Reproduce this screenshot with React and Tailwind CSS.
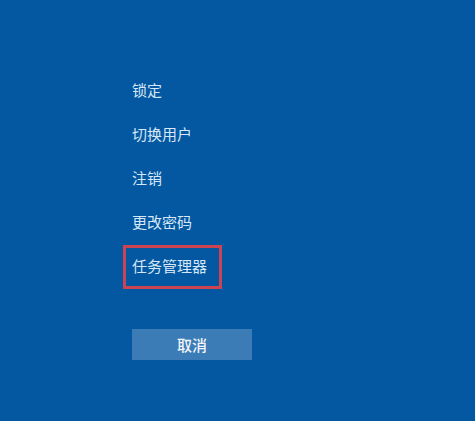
import React from "react";

const font = { fontFamily: '"Noto Sans CJK SC", "Microsoft YaHei", sans-serif' };

export default function App() {
  const items = ["锁定", "切换用户", "注销", "更改密码"];
  return (
    <div className="w-[475px] h-[421px] bg-[#0458a2] overflow-hidden" style={font}>
      <div className="pl-[132px] pt-[69px] flex flex-col">
        {items.map((t) => (
          <div key={t} className="h-[44px] flex items-center pb-[3px] text-[15px] leading-none text-[#d6e7f6]">
            {t}
          </div>
        ))}
        <div className="-ml-[9px] w-[99px] h-[44px] border-[3px] border-[#cc4452] flex items-center pl-[6px] pb-[3px] text-[15px] leading-none text-[#d6e7f6]">
          任务管理器
        </div>
        <div className="mt-[40px] w-[120px] h-[31px] bg-[#3b7bb6] flex items-center justify-center pb-[1px] text-[15px] leading-none text-[#f2f6fb] font-medium">
          取消
        </div>
      </div>
    </div>
  );
}
